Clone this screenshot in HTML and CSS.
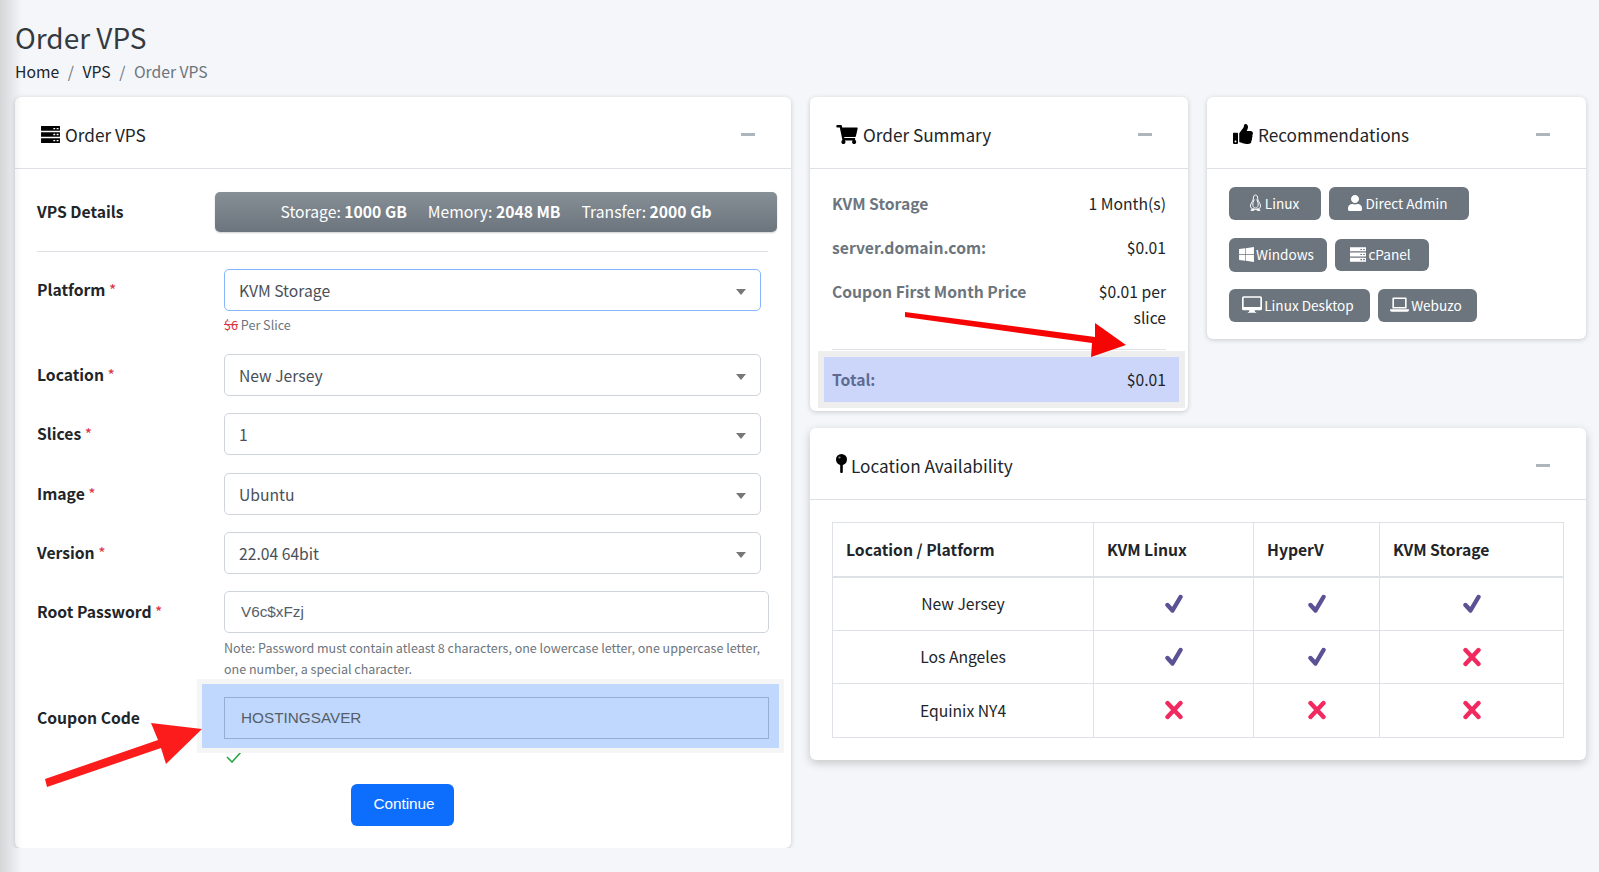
FILE: index.html
```html
<!DOCTYPE html>
<html>
<head>
  <title>Order VPS</title>
  <link rel="stylesheet" href="styles.css">
</head>
<body>
  <div class="edge-shadow"></div>
  <svg class="arrows" width="1599" height="872" viewBox="0 0 1599 872">
    <polygon class="arrow-left" points="45,779 158,740 151,723 202,729 166,764 161,748 47,787"/>
    <polygon class="arrow-right" points="905,312 1095,337 1095,323 1126,345 1091,357 1092,343 905,317"/>
  </svg>

  <div class="page">
    <div class="page-header">
      <h1>Order VPS</h1>
      <div class="breadcrumb">
        <a>Home</a><span class="sep">/</span><a>VPS</a><span class="sep">/</span><span class="current">Order VPS</span>
      </div>
    </div>

    <div class="layout">
      <div class="card">
        <div class="card-header">
          <h2>
            <svg class="icon icon-server" viewBox="0 0 20 18"><path fill-rule="evenodd" d="M0 0h20v5H0zM13 2v1.500h2V2zM16.500 2v1.500h2V2zM0 6.500h20v5H0zM13 8.250v1.500h2v-1.500zM16.500 8.250v1.500h2v-1.500zM0 13h20v5H0zM13 14.750v1.500h2v-1.500zM16.500 14.750v1.500h2v-1.500z"/></svg>
            Order VPS
          </h2>
          <span class="minus"></span>
        </div>
        <div class="card-body form-body">
          <div class="details-row">
            <div class="field-label">VPS Details</div>
            <div class="details-box">
              <span>Storage: <b>1000 GB</b></span>
              <span>Memory: <b>2048 MB</b></span>
              <span>Transfer: <b>2000 Gb</b></span>
            </div>
          </div>
          <hr class="form-divider">

          <div class="field field-hinted">
            <label class="field-label">Platform <i>*</i></label>
            <div class="control">
              <div class="select-wrap">
                <select class="select select-active"><option>KVM Storage</option></select>
              </div>
              <div class="hint"><s>$6</s> Per Slice</div>
            </div>
          </div>
          <div class="field">
            <label class="field-label">Location <i>*</i></label>
            <div class="control">
              <div class="select-wrap"><select class="select"><option>New Jersey</option></select></div>
            </div>
          </div>
          <div class="field">
            <label class="field-label">Slices <i>*</i></label>
            <div class="control">
              <div class="select-wrap"><select class="select"><option>1</option></select></div>
            </div>
          </div>
          <div class="field">
            <label class="field-label">Image <i>*</i></label>
            <div class="control">
              <div class="select-wrap"><select class="select"><option>Ubuntu</option></select></div>
            </div>
          </div>
          <div class="field">
            <label class="field-label">Version <i>*</i></label>
            <div class="control">
              <div class="select-wrap"><select class="select"><option>22.04 64bit</option></select></div>
            </div>
          </div>
          <div class="field field-password">
            <label class="field-label">Root Password <i>*</i></label>
            <div class="control">
              <input class="text-input" type="text" value="V6c$xFzj">
              <div class="note">Note: Password must contain atleast 8 characters, one lowercase letter, one uppercase letter, one number, a special character.</div>
            </div>
          </div>
          <div class="field field-coupon">
            <label class="field-label">Coupon Code</label>
            <div class="control">
              <div class="coupon-highlight">
                <input class="text-input coupon-input" type="text" value="HOSTINGSAVER">
              </div>
              <svg class="valid-check" viewBox="0 0 16 12"><path d="M1 6l5 5 9-10"/></svg>
            </div>
          </div>
          <div class="form-actions">
            <button class="btn-primary">Continue</button>
          </div>
        </div>
      </div>

      <div class="side">
        <div class="card">
          <div class="card-header">
            <h2>
              <svg class="icon icon-cart" viewBox="0 0 576 512"><path d="M528.12 301.319l47.273-208C578.806 78.301 567.391 64 551.99 64H159.208l-9.166-44.81C147.758 8.021 137.93 0 126.529 0H24C10.745 0 0 10.745 0 24v16c0 13.255 10.745 24 24 24h69.883l70.248 343.435C147.325 417.1 136 435.222 136 456c0 30.928 25.072 56 56 56s56-25.072 56-56c0-15.674-6.447-29.835-16.824-40h209.647C430.447 426.165 424 440.326 424 456c0 30.928 25.072 56 56 56s56-25.072 56-56c0-22.172-12.888-41.332-31.579-50.405l5.517-24.276c3.413-15.018-8.002-29.319-23.403-29.319H218.117l-6.545-32h293.145c11.206 0 20.92-7.754 23.403-18.681z"/></svg>
              Order Summary
            </h2>
            <span class="minus"></span>
          </div>
          <div class="card-body summary-body">
            <div class="summary-row"><span class="summary-label">KVM Storage</span><span class="summary-value">1 Month(s)</span></div>
            <div class="summary-row"><span class="summary-label">server.domain.com:</span><span class="summary-value">$0.01</span></div>
            <div class="summary-row"><span class="summary-label">Coupon First Month Price</span><span class="summary-value">$0.01 per slice</span></div>
            <hr class="summary-divider">
            <div class="summary-total"><span class="summary-label">Total:</span><span class="summary-value">$0.01</span></div>
          </div>
        </div>

        <div class="card card-recs">
          <div class="card-header">
            <h2>
              <svg class="icon icon-thumb" viewBox="0 0 512 512"><path d="M104 224H24c-13.255 0-24 10.745-24 24v240c0 13.255 10.745 24 24 24h80c13.255 0 24-10.745 24-24V248c0-13.255-10.745-24-24-24zM64 472c-13.255 0-24-10.745-24-24s10.745-24 24-24 24 10.745 24 24-10.745 24-24 24zM384 81.452c0 42.416-25.97 66.208-33.277 94.548h101.723c33.397 0 59.397 27.746 59.553 58.098.084 17.938-7.546 37.249-19.439 49.197l-.11.11c9.836 23.337 8.237 56.037-9.308 79.469 8.681 25.895-.069 57.704-16.382 74.757 4.298 17.598 2.244 32.575-6.148 44.632C440.202 511.587 389.616 512 346.839 512l-2.845-.001c-48.287-.017-87.806-17.598-119.56-31.725-15.957-7.099-36.821-15.887-52.651-16.178-6.54-.12-11.783-5.457-11.783-11.998v-213.77c0-3.2 1.282-6.271 3.558-8.521 39.614-39.144 56.648-80.587 89.117-113.111 14.804-14.832 20.188-37.236 25.393-58.902C282.515 39.293 291.817 0 312 0c24 0 72 8 72 81.452z"/></svg>
              Recommendations
            </h2>
            <span class="minus"></span>
          </div>
          <div class="card-body recs-body">
            <div class="btn-row">
              <a class="btn btn-linux">
                <svg class="btn-icon icon-tux" viewBox="0 0 14 17"><path d="M7 1C5.400 1 4.900 2.600 4.900 4.200 4.900 6.800 2.800 8.500 2.100 11c-.4 1.700.2 3 1.300 3.500l1.600.8h4l1.600-.8c1.100-.5 1.700-1.800 1.300-3.500C11.200 8.500 9.100 6.800 9.100 4.200 9.100 2.600 8.600 1 7 1zM5.500 14.800L2.300 16.200l3 .3zM8.500 14.800l3.200 1.400-3 .3zM5.800 5.500c-1 2-1.800 4-1.400 6 .3 1.700 1.300 2.500 2.600 2.500s2.300-.8 2.600-2.500c.4-2-.4-4-1.400-6"/></svg>
                Linux
              </a>
              <a class="btn btn-admin">
                <svg class="btn-icon icon-user" viewBox="0 0 448 512"><path d="M224 256c70.700 0 128-57.300 128-128S294.700 0 224 0 96 57.300 96 128s57.300 128 128 128zm89.600 32h-16.700c-22.200 10.200-46.900 16-72.900 16s-50.600-5.800-72.900-16h-16.700C60.200 288 0 348.200 0 422.400V464c0 26.500 21.500 48 48 48h352c26.500 0 48-21.500 48-48v-41.600c0-74.200-60.200-134.400-134.400-134.400z"/></svg>
                Direct Admin
              </a>
            </div>
            <div class="btn-row">
              <a class="btn btn-windows">
                <svg class="btn-icon icon-windows" viewBox="0 0 448 512"><path d="M0 93.700l183.600-25.300v177.400H0V93.700zm0 324.600l183.600 25.300V268.400H0v149.900zm202.800 28L448 480V268.400H202.800v177.900zm0-380.600v180.100H448V32L202.800 65.700z"/></svg>
                Windows
              </a>
              <a class="btn btn-cpanel">
                <svg class="btn-icon icon-hdd" viewBox="0 0 20 18"><path fill-rule="evenodd" d="M0 0h20v5H0zM13 2v1.500h2V2zM16.500 2v1.500h2V2zM0 6.500h20v5H0zM13 8.250v1.500h2v-1.500zM16.500 8.250v1.500h2v-1.500zM0 13h20v5H0zM13 14.750v1.500h2v-1.500zM16.500 14.750v1.500h2v-1.500z"/></svg>
                cPanel
              </a>
            </div>
            <div class="btn-row">
              <a class="btn btn-desktop">
                <svg class="btn-icon icon-desktop" viewBox="0 0 24 20"><path fill-rule="evenodd" d="M0 2a2 2 0 012-2h20a2 2 0 012 2v13a2 2 0 01-2 2h-7l.7 2H17v1H7v-1h1.300l.7-2H2a2 2 0 01-2-2zM2 2v11h20V2z"/></svg>
                Linux Desktop
              </a>
              <a class="btn btn-webuzo">
                <svg class="btn-icon icon-laptop" viewBox="0 0 24 18"><path fill-rule="evenodd" d="M4 0h16a1 1 0 011 1v13H3V1a1 1 0 011-1zM5 2v10h14V2zM0 15h24v1a2 2 0 01-2 2H2a2 2 0 01-2-2z"/></svg>
                Webuzo
              </a>
            </div>
          </div>
        </div>

        <div class="card card-wide">
          <div class="card-header">
            <h2>
              <svg class="icon icon-pin" viewBox="0 0 11 19"><circle cx="5.500" cy="5.500" r="5.500"/><rect x="4.200" y="9" width="2.600" height="10" rx="1"/><circle class="pin-shine" cx="3.500" cy="3.500" r="1.100"/></svg>
              Location Availability
            </h2>
            <span class="minus"></span>
          </div>
          <div class="card-body table-body">
            <table class="avail-table">
              <thead>
                <tr><th class="col-location">Location / Platform</th><th class="col-linux">KVM Linux</th><th class="col-hyperv">HyperV</th><th>KVM Storage</th></tr>
              </thead>
              <tbody>
                <tr>
                  <td>New Jersey</td>
                  <td><svg class="mark mark-yes" viewBox="0 0 18 20"><path d="M2.500 11l5 5.500L15.500 3"/></svg></td>
                  <td><svg class="mark mark-yes" viewBox="0 0 18 20"><path d="M2.500 11l5 5.500L15.500 3"/></svg></td>
                  <td><svg class="mark mark-yes" viewBox="0 0 18 20"><path d="M2.500 11l5 5.500L15.500 3"/></svg></td>
                </tr>
                <tr>
                  <td>Los Angeles</td>
                  <td><svg class="mark mark-yes" viewBox="0 0 18 20"><path d="M2.500 11l5 5.500L15.500 3"/></svg></td>
                  <td><svg class="mark mark-yes" viewBox="0 0 18 20"><path d="M2.500 11l5 5.500L15.500 3"/></svg></td>
                  <td><svg class="mark mark-no" viewBox="0 0 18 20"><path d="M2.500 3l13 14M15.500 3l-13 14"/></svg></td>
                </tr>
                <tr>
                  <td>Equinix NY4</td>
                  <td><svg class="mark mark-no" viewBox="0 0 18 20"><path d="M2.500 3l13 14M15.500 3l-13 14"/></svg></td>
                  <td><svg class="mark mark-no" viewBox="0 0 18 20"><path d="M2.500 3l13 14M15.500 3l-13 14"/></svg></td>
                  <td><svg class="mark mark-no" viewBox="0 0 18 20"><path d="M2.500 3l13 14M15.500 3l-13 14"/></svg></td>
                </tr>
              </tbody>
            </table>
          </div>
        </div>
      </div>
    </div>
  </div>
</body>
</html>
```

FILE: styles.css
```css
body {
  font-family: "Noto Sans CJK SC", "Noto Sans", sans-serif;
  font-size: 15.7px;
  margin: 0;
  color: #212529;
  background-color: #f4f6f9;
}
.edge-shadow {
  position: fixed;
  left: 0;
  top: 0;
  bottom: 0;
  width: 22px;
  z-index: 5;
  pointer-events: none;
  background: linear-gradient(to right, rgba(0, 0, 0, 0.13), rgba(0, 0, 0, 0));
}
.arrows {
  position: absolute;
  left: 0;
  top: 0;
  z-index: 4;
  pointer-events: none;
}
.arrow-left {
  fill: #fc1c1c;
}
.arrow-right {
  fill: #f60505;
}
.page {
  padding: 0 14px 0 15px;
}
.page-header {
  height: 97px;
}
.page-header h1 {
  font-size: 28px;
  font-weight: 400;
  line-height: 38px;
  margin: 0;
  padding-top: 18px;
  color: #343a40;
}
.breadcrumb {
  line-height: 24px;
  margin-top: 4px;
}
.breadcrumb .sep {
  color: #6c757d;
  padding: 0 8.6px;
}
.breadcrumb .current {
  color: #6c757d;
}
.layout {
  display: grid;
  grid-template-columns: 776px 776px;
  column-gap: 19px;
  align-items: start;
}
.side {
  display: grid;
  grid-template-columns: 378px 379px;
  gap: 17px 19px;
  align-items: start;
}
.card-wide {
  grid-column: 1 / 3;
}
.card-recs {
  grid-row: 1;
  grid-column: 2;
}
.card {
  background-color: #fff;
  border-radius: 6px;
  box-shadow: 0 1px 5px rgba(0, 0, 0, 0.18);
}
.card-wide {
  box-shadow: 0 3px 10px rgba(0, 0, 0, 0.2);
}
.card-header {
  display: flex;
  justify-content: space-between;
  align-items: center;
  height: 71px;
  padding: 0 36px 0 26px;
  border-bottom: 1px solid #dee2e6;
}
.card-header h2 {
  display: flex;
  align-items: center;
  gap: 5px;
  font-size: 17.2px;
  font-weight: 400;
  margin: 3px 0 0;
  color: #212529;
}
.minus {
  width: 14px;
  height: 3px;
  margin-top: 3px;
  background-color: #adb5bd;
}
.icon {
  display: block;
  fill: #000;
}
.icon-server {
  width: 19px;
  height: 17px;
}
.icon-cart {
  width: 22px;
  height: 19px;
}
.icon-thumb {
  width: 20px;
  height: 20px;
}
.icon-pin {
  width: 11px;
  height: 19px;
  margin: -3px -1px 0 0;
}
.pin-shine {
  fill: #8a8a8a;
}
.card-body {
  padding: 22px;
}
.form-body {
  padding-top: 23px;
}
.details-row {
  display: flex;
}
.field-label {
  display: block;
  width: 187px;
  flex: none;
  height: 42px;
  font-weight: 700;
  line-height: 41.5px;
  color: #212529;
}
.field-label i {
  color: #dc3545;
  font-style: normal;
  font-weight: 400;
}
.details-row .field-label {
  width: 178px;
  height: 40px;
  line-height: 39.5px;
}
.details-box {
  display: flex;
  flex: none;
  justify-content: center;
  align-items: center;
  gap: 21px;
  width: 562px;
  height: 40px;
  padding-bottom: 2px;
  box-sizing: border-box;
  color: #fff;
  border-radius: 5px;
  background: linear-gradient(to bottom, #868e96, #6c757d);
  box-shadow: 0 1px 2px rgba(0, 0, 0, 0.2);
}
.form-divider {
  border: 0;
  border-top: 1px solid #dee2e6;
  margin: 19px 0 17px;
  width: 731px;
}
.field {
  display: flex;
  margin-bottom: 17.25px;
}
.field-hinted {
  margin-bottom: 17px;
}
.control {
  width: 545px;
}
.select-wrap {
  position: relative;
  width: 537px;
}
.select-wrap::after {
  content: "";
  position: absolute;
  right: 15px;
  top: 20px;
  border-left: 5px solid transparent;
  border-right: 5px solid transparent;
  border-top: 6px solid #777;
}
.select {
  display: block;
  box-sizing: border-box;
  width: 100%;
  height: 42px;
  padding: 1px 14px 0;
  font-family: inherit;
  font-size: 15.7px;
  color: #495057;
  background-color: #fff;
  border: 1px solid #ced4da;
  border-radius: 5px;
  appearance: none;
  outline: none;
}
.select-active {
  border-color: #86b7fe;
}
.hint {
  height: 26px;
  font-size: 12.6px;
  line-height: 28px;
  color: #6c757d;
}
.hint s {
  color: #dc3545;
}
.text-input {
  display: block;
  box-sizing: border-box;
  width: 545px;
  height: 42px;
  padding: 0 16px;
  font-family: "Liberation Sans", Arial, sans-serif;
  font-size: 15.3px;
  color: #555e68;
  background-color: #fff;
  border: 1px solid #ced4da;
  border-radius: 5px;
  outline: none;
}
.note {
  font-size: 12.5px;
  line-height: 21px;
  margin-top: 4px;
  color: #6c757d;
}
.field-password {
  margin-bottom: 0;
  height: 93px;
}
.field-coupon {
  margin-top: 13px;
  margin-bottom: 0;
}
.coupon-highlight {
  margin: -13px -10px -9px -22px;
  padding: 13px 10px 9px 22px;
  background-color: #c0d8fd;
  outline: 5px solid #f5f5f5;
}
.coupon-input {
  background-color: transparent;
  border-color: #97aed3;
  border-radius: 0;
}
.valid-check {
  display: block;
  width: 16px;
  height: 12px;
  margin: 12px 0 0 2px;
  fill: none;
  stroke: #28a745;
  stroke-width: 1.6;
}
.form-actions {
  display: flex;
  justify-content: center;
  margin-top: 21px;
  padding-right: 2px;
}
.btn-primary {
  width: 103px;
  height: 42px;
  padding: 0 0 2px 4px;
  font-family: "Liberation Sans", Arial, sans-serif;
  font-size: 15.3px;
  color: #fff;
  background-color: #0d6efd;
  border: none;
  border-radius: 6px;
}
.summary-body {
  padding: 22px 22px 9px;
}
.summary-row {
  display: flex;
  justify-content: space-between;
  line-height: 26px;
  margin-bottom: 18px;
}
.summary-label {
  font-weight: 700;
  color: #6c757d;
}
.summary-value {
  max-width: 80px;
  text-align: right;
}
.summary-divider {
  border: 0;
  border-top: 1px solid #dee2e6;
  margin: 18px 0 7px;
}
.summary-row:nth-child(3) {
  margin-bottom: 0;
}
.summary-total {
  display: flex;
  justify-content: space-between;
  align-items: center;
  height: 45px;
  margin: 0 -13px 0 -8px;
  padding: 0 13px 0 8px;
  box-sizing: border-box;
  background-color: #ccd6fb;
  outline: 6px solid #eeeeee;
}
.summary-total .summary-label {
  color: #5d6b92;
}
.recs-body {
  padding: 18px 22px 16px;
}
.btn-row {
  display: flex;
  gap: 8px;
  height: 34px;
  margin-bottom: 17px;
}
.btn-row:last-child {
  margin-bottom: 0;
}
.btn {
  display: flex;
  justify-content: center;
  align-items: center;
  gap: 2px;
  box-sizing: border-box;
  height: 33px;
  padding: 0 3px 2px 0;
  font-size: 13.6px;
  color: #fff;
  background-color: #6c757d;
  border-radius: 6px;
}
.btn-icon {
  display: block;
  fill: #fff;
}
.btn-linux {
  width: 92px;
}
.btn-admin {
  width: 140px;
}
.btn-windows {
  width: 98px;
  height: 34px;
}
.btn-cpanel {
  width: 94px;
  height: 32px;
  margin-top: 1px;
}
.btn-desktop {
  width: 141px;
}
.btn-webuzo {
  width: 99px;
}
.icon-tux {
  width: 15px;
  height: 17px;
  fill: none;
  stroke: #fff;
  stroke-width: 1;
}
.icon-user {
  width: 16px;
  height: 16px;
}
.icon-windows {
  width: 15px;
  height: 17px;
}
.icon-hdd {
  width: 16px;
  height: 15px;
}
.icon-desktop {
  width: 20px;
  height: 17px;
}
.icon-laptop {
  width: 19px;
  height: 15px;
}
.table-body {
  padding: 22px 21px 22px 22px;
}
.avail-table {
  width: 732px;
  border-collapse: collapse;
  table-layout: fixed;
}
.avail-table th, .avail-table td {
  box-sizing: border-box;
  border: 1px solid #dee2e6;
}
.avail-table th {
  height: 54px;
  padding: 0 13px;
  text-align: left;
  font-weight: 700;
  border-bottom-width: 2px;
}
.avail-table td {
  height: 53.5px;
  padding: 0;
  text-align: center;
}
.col-location {
  width: 261px;
}
.col-linux {
  width: 160px;
}
.col-hyperv {
  width: 126px;
}
.mark {
  display: block;
  width: 18px;
  height: 20px;
  margin: 0 auto;
  fill: none;
  stroke-linecap: round;
  stroke-linejoin: round;
  stroke-width: 4.4;
}
.mark-yes {
  stroke: #5b5295;
}
.mark-no {
  stroke: #f1295f;
}
```
